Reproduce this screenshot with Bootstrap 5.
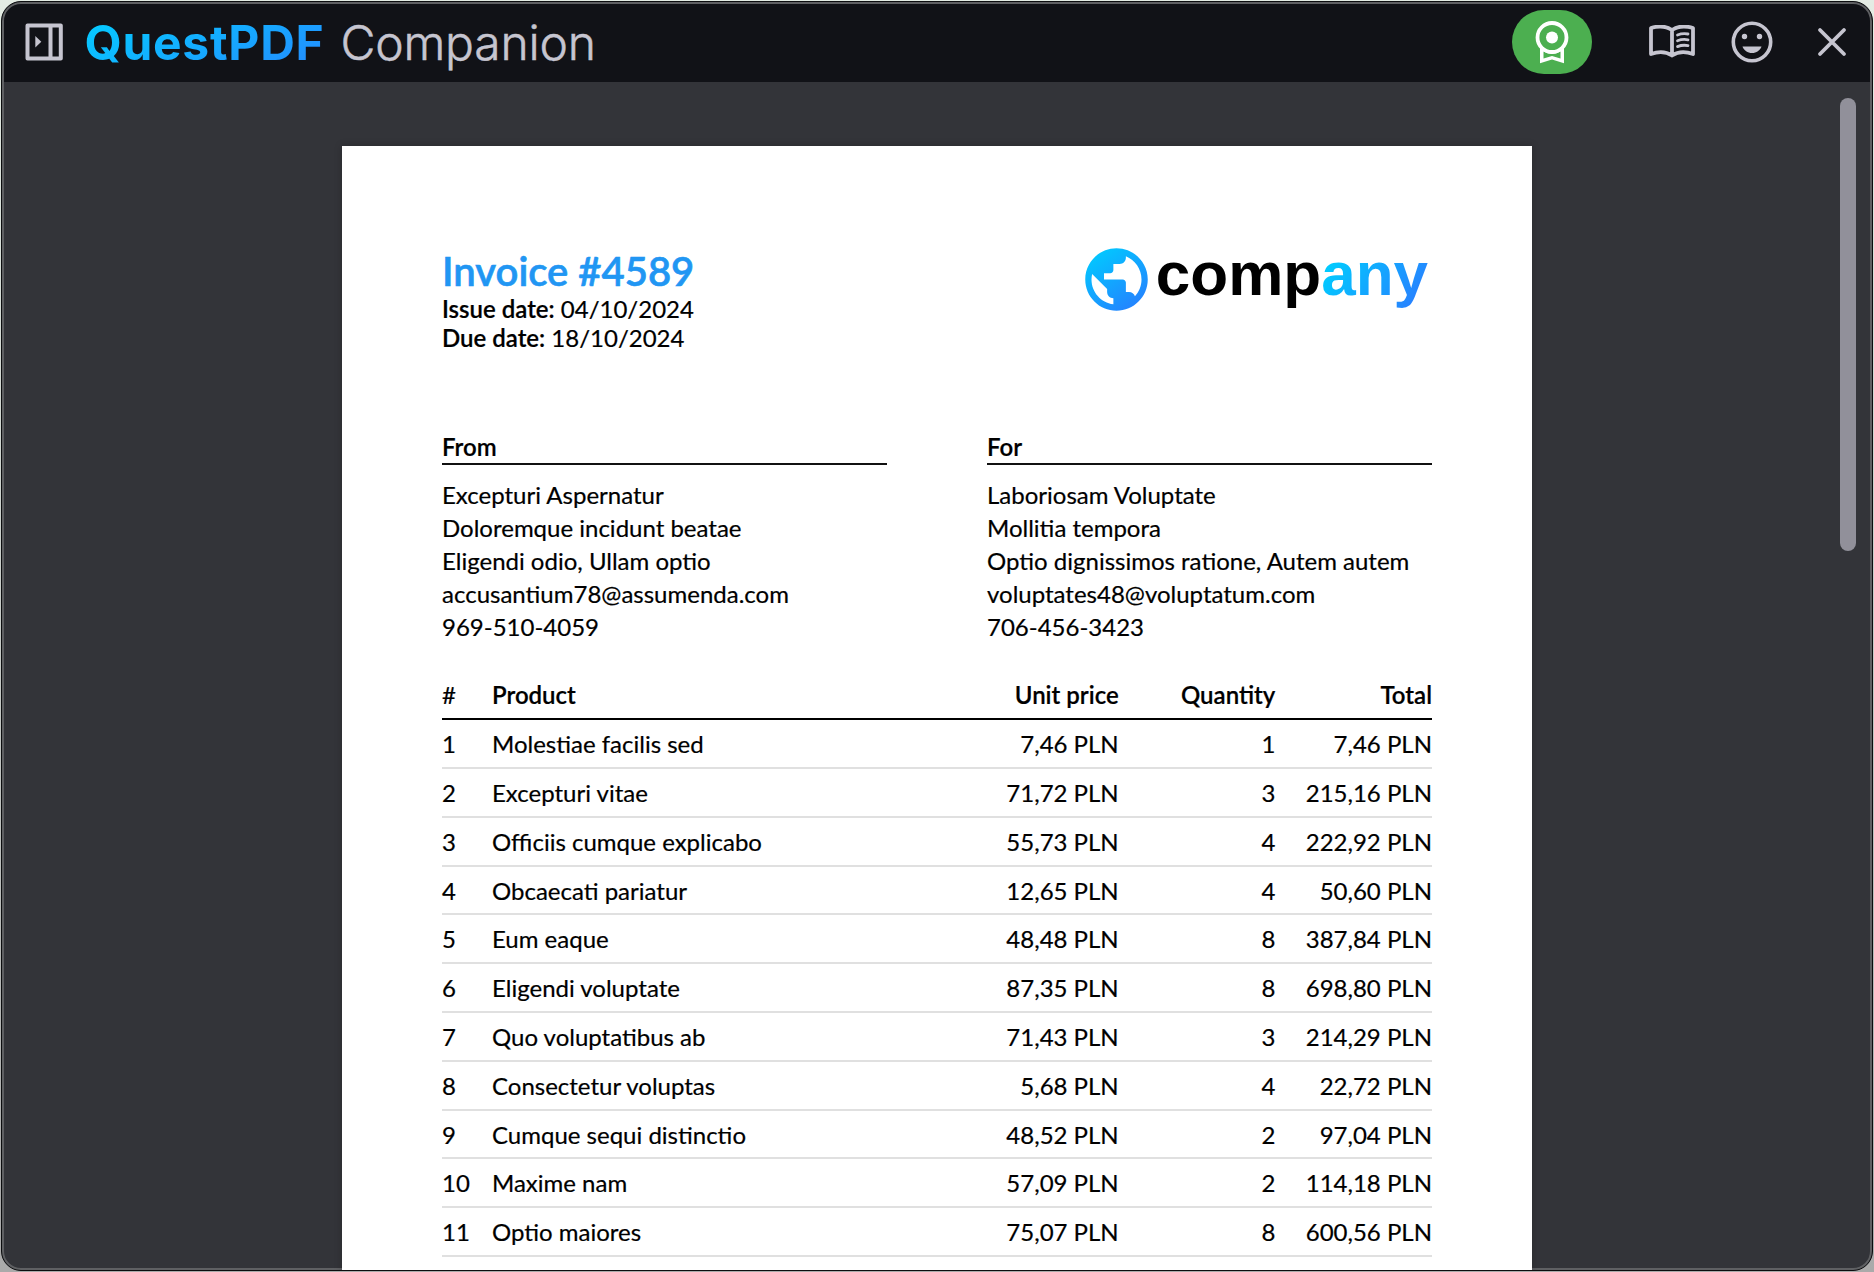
<!DOCTYPE html>
<html lang="en">
<head>
<meta charset="utf-8">
<meta name="viewport" content="width=device-width, initial-scale=1">
<title>QuestPDF Companion</title>
<link href="https://cdn.jsdelivr.net/npm/bootstrap@5.3.0/dist/css/bootstrap.min.css" rel="stylesheet">
<style>
html, body { height: 100%; overflow: hidden; }
body { background: linear-gradient(#e4ece4, #aaa); font-family: Inter, sans-serif; padding: 1px; }
.app-window { height: 1270px; border: 1px solid #0c0d0f; border-radius: 20px; background: #333439; position: relative; }
.app-window::after { content: ""; position: absolute; inset: 0; border: 2px solid #5f6063; border-radius: 19px; pointer-events: none; }
.title-bar { height: 80px; flex: none; background: #111217; color: #c6c5d0; padding: 0 22px; }
.title-bar svg { display: block; flex: none; }
.brand { font-size: 48px; line-height: 80px; white-space: nowrap; margin-left: 20.5px; padding-top: 1px; }
.brand b { font-weight: 700; letter-spacing: .7px; background: linear-gradient(155deg, #06c8ff 10%, #2290ff 90%); -webkit-background-clip: text; background-clip: text; color: transparent; }
.brand-sub { font-weight: 300; letter-spacing: -.2px; margin-left: 16px; -webkit-text-stroke: .5px; }
.license-pill { width: 80px; height: 64px; background: #4caf50; border-radius: 32px; }
.scroll-thumb { position: absolute; right: 16px; top: 96px; width: 16px; height: 453px; border-radius: 8px; background: #91909a; z-index: 2; }
.sheet { width: 1190px; min-height: 1300px; margin-top: 64px; margin-left: 340px; padding: 101px 100px 0; background: #fff; color: #000; font-family: Lato, sans-serif; font-size: 24px; line-height: 28.8px; box-shadow: 0 0 8px rgba(0,0,0,.2); position: relative; z-index: 1; -webkit-text-stroke: .2px; }
.sheet h1 { font-size: 40px; line-height: 48px; font-weight: 600; color: #2196f3; margin: 0; -webkit-text-stroke: .6px; }
.sheet strong, .sheet th { font-weight: 600; }
.logo-word { font: 700 62px/63px "Liberation Sans", sans-serif; -webkit-text-stroke: 0; }
.logo-word span { background: linear-gradient(125deg, #0cf 15%, #2684ff 85%); -webkit-background-clip: text; background-clip: text; color: transparent; padding-bottom: 6px; }
.company-logo { height: 76px; margin-top: -5px; margin-right: 4px; }
.company-logo svg { margin-right: 2px; }
.parties { gap: 100px; margin-top: 80px; }
.party-title { font-weight: 600; border-bottom: 2px solid #111; height: 32.5px; margin-bottom: 13px; }
.party-lines div { line-height: 33px; }
.items { width: 990px; table-layout: fixed; margin-top: 28.4px; border-collapse: separate; border-spacing: 0; }
.items td, .items th { padding: 10px 0 8px; height: 48.8px; border-bottom: 2px solid #e0e0e0; white-space: nowrap; }
.items th { border-bottom-color: #000; padding: 9px 0 7px; }
</style>
<script src="https://cdn.jsdelivr.net/npm/bootstrap@5.3.0/dist/js/bootstrap.bundle.min.js"></script>
</head>
<body>
<div class="app-window d-flex flex-column overflow-hidden">
  <header class="title-bar d-flex align-items-center">
    <svg width="40" height="38" viewBox="0 0 40 38"><path fill="none" stroke="#c6c5d0" stroke-width="4" stroke-linejoin="round" d="M3.500 2.500h33.300v33H3.500zM26.500 3v32"/><path d="M11.300 13l6 5.800-6 5.800z" fill="#c6c5d0"/></svg>
    <div class="brand"><b>QuestPDF</b><span class="brand-sub">Companion</span></div>
    <div class="license-pill d-flex align-items-center justify-content-center ms-auto">
      <svg width="36" height="44" viewBox="0 0 36 44"><path fill="#fff" d="M6 26v17.300l12-3.800 12 3.800V26z"/><path fill="#4caf50" d="M9.500 31.500q8.500 5 17 0v7L18 36l-8.500 2.500z"/><circle cx="18" cy="17.500" r="14.500" fill="#4caf50" stroke="#fff" stroke-width="3.800"/><circle cx="18" cy="17.500" r="6" fill="#fff"/></svg>
    </div>
    <svg style="margin-left:57px" width="46" height="34" viewBox="0 0 46 34" fill="none" stroke="#c6c5d0" stroke-width="3.800" stroke-linejoin="round" stroke-linecap="round"><path d="M23 5C17 1 9 .8 2 3V29C9 26.500 17 26.500 23 30.500C29 26.500 37 26.500 44 29V3C37 .8 29 1 23 5V30.500"/><path stroke-width="2.800" d="M28.500 10q5-2 10.500-1M28.500 15.800q5-2 10.500-1M28.500 21.600q5-2 10.500-1"/></svg>
    <svg style="margin-left:36px" width="42" height="42" viewBox="0 0 42 42"><circle cx="21" cy="21" r="18.700" fill="none" stroke="#c6c5d0" stroke-width="3.600"/><g fill="#c6c5d0"><circle cx="13.500" cy="15.500" r="2.700"/><circle cx="28.500" cy="15.500" r="2.700"/><path d="M11.500 25.500h19c-1.500 4-5 6.500-9.500 6.500s-8-2.500-9.500-6.500z"/></g></svg>
    <svg style="margin-left:44px;margin-right:3px" width="30" height="30" viewBox="0 0 30 30" stroke="#c6c5d0" stroke-width="3.800" stroke-linecap="round"><path d="M3 3l24 24M27 3L3 27"/></svg>
  </header>
  <div class="scroll-thumb"></div>
  <main class="flex-grow-1 overflow-hidden">
    <article class="sheet">
      <div class="d-flex justify-content-between align-items-start">
        <div>
          <h1>Invoice #4589</h1>
          <div><strong>Issue date:</strong> 04/10/2024</div>
          <div><strong>Due date:</strong> 18/10/2024</div>
        </div>
        <div class="company-logo d-flex align-items-start">
          <svg width="75" height="75" viewBox="0 0 24 24"><defs><linearGradient id="globe" x1="0.150" y1="0" x2="0.850" y2="1"><stop offset="0" stop-color="#0cf"/><stop offset="1" stop-color="#267eff"/></linearGradient></defs><path fill="url(#globe)" d="M12 2C6.480 2 2 6.480 2 12s4.480 10 10 10 10-4.480 10-10S17.520 2 12 2zm-1 17.930c-3.950-.490-7-3.850-7-7.930 0-.620.080-1.210.210-1.790L9 15v1c0 1.100.900 2 2 2v1.930zm6.900-2.540c-.260-.810-1-1.390-1.900-1.390h-1v-3c0-.550-.450-1-1-1H8v-2h2c.550 0 1-.450 1-1V7h2c1.100 0 2-.900 2-2v-.410c2.930 1.190 5 4.060 5 7.410 0 2.080-.800 3.970-2.100 5.390z"/></svg>
          <div class="logo-word">comp<span>any</span></div>
        </div>
      </div>
      <div class="parties d-flex">
        <section class="w-50">
          <div class="party-title">From</div>
          <div class="party-lines"><div>Excepturi Aspernatur</div><div>Doloremque incidunt beatae</div><div>Eligendi odio, Ullam optio</div><div>accusantium78@assumenda.com</div><div>969-510-4059</div></div>
        </section>
        <section class="w-50">
          <div class="party-title">For</div>
          <div class="party-lines"><div>Laboriosam Voluptate</div><div>Mollitia tempora</div><div>Optio dignissimos ratione, Autem autem</div><div>voluptates48@voluptatum.com</div><div>706-456-3423</div></div>
        </section>
      </div>
      <table class="items">
        <colgroup><col style="width:50px"><col style="width:470px"><col style="width:156.700px"><col style="width:156.700px"><col style="width:156.600px"></colgroup>
        <thead><tr><th class="fw-normal">#</th><th>Product</th><th class="text-end">Unit price</th><th class="text-end">Quantity</th><th class="text-end">Total</th></tr></thead>
        <tbody>
          <tr><td>1</td><td>Molestiae facilis sed</td><td class="text-end">7,46 PLN</td><td class="text-end">1</td><td class="text-end">7,46 PLN</td></tr>
          <tr><td>2</td><td>Excepturi vitae</td><td class="text-end">71,72 PLN</td><td class="text-end">3</td><td class="text-end">215,16 PLN</td></tr>
          <tr><td>3</td><td>Officiis cumque explicabo</td><td class="text-end">55,73 PLN</td><td class="text-end">4</td><td class="text-end">222,92 PLN</td></tr>
          <tr><td>4</td><td>Obcaecati pariatur</td><td class="text-end">12,65 PLN</td><td class="text-end">4</td><td class="text-end">50,60 PLN</td></tr>
          <tr><td>5</td><td>Eum eaque</td><td class="text-end">48,48 PLN</td><td class="text-end">8</td><td class="text-end">387,84 PLN</td></tr>
          <tr><td>6</td><td>Eligendi voluptate</td><td class="text-end">87,35 PLN</td><td class="text-end">8</td><td class="text-end">698,80 PLN</td></tr>
          <tr><td>7</td><td>Quo voluptatibus ab</td><td class="text-end">71,43 PLN</td><td class="text-end">3</td><td class="text-end">214,29 PLN</td></tr>
          <tr><td>8</td><td>Consectetur voluptas</td><td class="text-end">5,68 PLN</td><td class="text-end">4</td><td class="text-end">22,72 PLN</td></tr>
          <tr><td>9</td><td>Cumque sequi distinctio</td><td class="text-end">48,52 PLN</td><td class="text-end">2</td><td class="text-end">97,04 PLN</td></tr>
          <tr><td>10</td><td>Maxime nam</td><td class="text-end">57,09 PLN</td><td class="text-end">2</td><td class="text-end">114,18 PLN</td></tr>
          <tr><td>11</td><td>Optio maiores</td><td class="text-end">75,07 PLN</td><td class="text-end">8</td><td class="text-end">600,56 PLN</td></tr>
        </tbody>
      </table>
    </article>
  </main>
</div>
</body>
</html>
